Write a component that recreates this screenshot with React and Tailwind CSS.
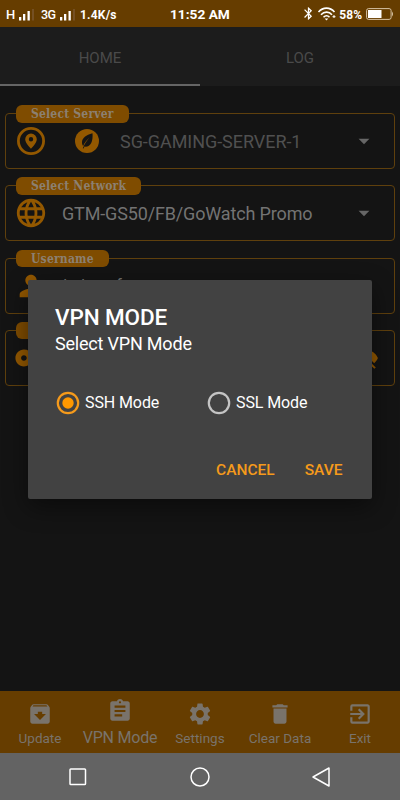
import {
  MdArchive,
  MdArrowDropDown,
  MdAssignment,
  MdBluetooth,
  MdDelete,
  MdExitToApp,
  MdLanguage,
  MdPerson,
  MdSettings,
  MdVisibilityOff,
  MdVpnKey,
} from "react-icons/md";

const navItems = [
  { label: "Update", icon: MdArchive },
  { label: "VPN Mode", icon: MdAssignment, active: true },
  { label: "Settings", icon: MdSettings },
  { label: "Clear Data", icon: MdDelete },
  { label: "Exit", icon: MdExitToApp },
];

function Signal() {
  return (
    <svg viewBox="0 0 17 12" className="h-3 w-[17px] shrink-0">
      <path d="M1 8h2.300v3.500H1zM5 5h2.300v6.500H5zM9.500 2h2.300v9.500H9.500z" fill="#fff" />
      <path d="M14 0h2v11.500h-2z" fill="#755023" />
    </svg>
  );
}

function StatusBar() {
  return (
    <header className="relative flex h-[27px] shrink-0 items-center bg-[#663d00] text-white">
      <div className="flex items-center pt-0.5 pl-1.5">
        <span className="w-[12px] text-[13px] font-medium">H</span>
        <Signal />
        <span className="ml-1.5 w-[18px] pt-px text-[12.5px] font-medium tracking-[-0.5px]">3G</span>
        <Signal />
        <span className="ml-1 text-[12px] font-bold tracking-[0.2px]">1.4K/s</span>
      </div>
      <span className="absolute left-[170px] pt-0.5 text-[13.7px] font-bold">11:52 AM</span>
      <div className="ml-auto flex items-center pr-[6px]">
        <MdBluetooth className="size-[15px]" />
        <svg viewBox="0 0 20 14" className="ml-px h-[14px] w-[20px]" fill="none" stroke="#fff" strokeWidth="1.6">
          <path d="M1.500 5C6-.2 13-.2 17.500 5M4 7.700c3.200-3.500 8-3.500 11 0M6.500 10.200c2-2 4.200-2 6 0" />
          <path d="M9.500 13.500l-1.800-2h3.600z" fill="#fff" stroke="none" />
          <path d="M17 8v3M15.500 9.700h3" strokeWidth="1" />
        </svg>
        <span className="ml-0.5 pt-0.5 text-[12px] font-bold">58%</span>
        <svg viewBox="0 0 28 12" className="ml-1 h-3 w-7">
          <rect x="0.6" y="0.6" width="24.500" height="10.800" rx="2" fill="none" stroke="#d8c4a5" />
          <path d="M2 2h13.500v8H2z" fill="#fff" />
          <path d="M26 3.500q2 2.500 0 5z" fill="#d8c4a5" />
        </svg>
      </div>
    </header>
  );
}

function Tabs() {
  return (
    <div className="grid h-[59px] shrink-0 grid-cols-2 bg-[#1c1c1c] text-[15px] text-[#4a4a4a]">
      <div className="flex items-center justify-center border-b-2 border-[#656565] pt-1.5">HOME</div>
      <div className="flex items-center justify-center pt-1">LOG</div>
    </div>
  );
}

function Field({ label, labelClass, children }) {
  return (
    <div className="relative h-[56px] rounded-[4px] border border-[#5f400d]">
      <span
        className={`absolute -top-[9px] left-[10px] h-[17.5px] rounded-[6px] bg-[#7f4c00] pl-[15px] font-['DejaVu_Serif_Condensed','DejaVu_Serif',serif] text-[12px] leading-[19.5px] font-bold tracking-[0.2px] whitespace-nowrap text-[#8c8071] ${labelClass}`}
      >
        {label}
      </span>
      <div className="flex h-full items-center pr-[17px] pl-[8px]">{children}</div>
    </div>
  );
}

function PinIcon() {
  return (
    <svg viewBox="0 0 30 30" className="size-[30px] shrink-0">
      <circle cx="15" cy="15" r="12.600" fill="none" stroke="#935800" strokeWidth="2.800" />
      <path
        d="M15 7.500a5.800 5.800 0 0 0-5.800 5.800c0 4.200 5.800 9.500 5.800 9.500s5.800-5.300 5.800-9.500A5.800 5.800 0 0 0 15 7.500zm0 8a2.200 2.200 0 1 1 0-4.400 2.200 2.200 0 0 1 0 4.400z"
        fill="#935800"
      />
    </svg>
  );
}

function LeafIcon() {
  return (
    <svg viewBox="0 0 24 24" className="ml-[29px] size-[24px] shrink-0">
      <circle cx="12" cy="12" r="12" fill="#935800" />
      <path
        d="M17.500 4.200C11 6 7.200 9 7 13c-.1 1.800.4 3 1.200 4C9.600 13.500 11.500 11 14.600 8.500 12 11.700 9.700 14.500 7.800 19.300l.8.200.9-1.900c6 .8 8.700-5 8-13.400z"
        fill="#141414"
      />
    </svg>
  );
}

function NavBar() {
  return (
    <nav className="grid h-[62px] shrink-0 grid-cols-5 bg-[#663d00] text-[#79736b]">
      {navItems.map(({ label, icon: Icon, active }) => (
        <div key={label} className={`flex flex-col items-center ${active ? "pt-[7px]" : "pt-[10px]"}`}>
          <Icon className="size-[26px]" />
          <span
            className={`whitespace-nowrap ${active ? "text-[16px] leading-[27px] tracking-[-0.2px]" : "text-[13.5px] leading-[22px]"}`}
          >
            {label}
          </span>
        </div>
      ))}
    </nav>
  );
}

function SystemBar() {
  return (
    <footer className="flex h-[47px] shrink-0 items-center justify-between bg-[#636363] px-[68px]">
      <svg viewBox="0 0 20 20" className="size-5" fill="none" stroke="#fff" strokeWidth="1.5">
        <rect x="2" y="2" width="15.500" height="15.500" rx="0.8" />
      </svg>
      <svg viewBox="0 0 20 20" className="size-5" fill="none" stroke="#fff" strokeWidth="1.5">
        <circle cx="10" cy="10" r="9" />
      </svg>
      <svg viewBox="0 0 20 20" className="size-5" fill="none" stroke="#fff" strokeWidth="1.5" strokeLinejoin="round">
        <path d="M17 1v18L1 10z" />
      </svg>
    </footer>
  );
}

function Radio({ label, checked }) {
  return (
    <label className="flex w-[151px] shrink-0 items-center text-[16px] tracking-[-0.1px] text-white">
      <svg viewBox="0 0 24 24" className="mr-[5px] size-6" fill="none">
        <circle cx="12" cy="12" r="10.200" stroke={checked ? "#f59a1b" : "#c4c4c4"} strokeWidth="2.2" />
        {checked && <circle cx="12" cy="12" r="5.700" fill="#ff9800" />}
      </svg>
      {label}
    </label>
  );
}

function Dialog() {
  return (
    <div className="absolute top-[280px] left-[28px] flex h-[219px] w-[344px] flex-col rounded-[2px] bg-[#424242] px-[27px] pt-[24px] text-white shadow-[0_8px_24px_rgba(0,0,0,0.45)]">
      <h2 className="text-[22.5px] leading-[26px] font-medium tracking-[-0.1px]">VPN MODE</h2>
      <p className="text-[18px] leading-[27px] tracking-[-0.2px]">Select VPN Mode</p>
      <div className="mt-[34px] flex pl-px">
        <Radio label="SSH Mode" checked />
        <Radio label="SSL Mode" />
      </div>
      <div className="mt-[43px] flex justify-end gap-[30px] pr-[2.5px] text-[15.5px] leading-6 font-medium text-[#f59a1b]">
        <button>CANCEL</button>
        <button>SAVE</button>
      </div>
    </div>
  );
}

export default function App() {
  return (
    <div className="relative flex h-[800px] w-[400px] flex-col overflow-hidden bg-[#141414] font-['Roboto',sans-serif]">
      <StatusBar />
      <Tabs />
      <main className="flex flex-1 flex-col gap-[16.3px] pt-[27px] pr-[5px] pl-[5px]">
        <Field label="Select Server" labelClass="w-[113px]">
          <div className="pl-[2px]">
            <PinIcon />
          </div>
          <LeafIcon />
          <span className="ml-[21px] text-[18px] tracking-[-0.05px] text-[#505050]">SG-GAMING-SERVER-1</span>
          <MdArrowDropDown className="ml-auto size-[26px] shrink-0 text-[#666]" />
        </Field>
        <Field label="Select Network" labelClass="w-[125px]">
          <MdLanguage className="size-[34px] shrink-0 text-[#935800]" />
          <span className="ml-[14px] text-[18px] tracking-[-0.15px] whitespace-nowrap text-[#737373]">
            GTM-GS50/FB/GoWatch Promo
          </span>
          <MdArrowDropDown className="ml-auto size-[26px] shrink-0 text-[#666]" />
        </Field>
        <Field label="Username" labelClass="w-[93px]">
          <MdPerson className="size-[34px] shrink-0 text-[#935800]" />
          <span className="ml-[10px] pt-px text-[16px] text-[#737373]">darkgoof</span>
        </Field>
        <Field labelClass="w-[92px]">
          <MdVpnKey className="size-[34px] shrink-0 text-[#935800]" />
          <MdVisibilityOff className="-mr-0.5 ml-auto size-[26px] text-[#935800]" />
        </Field>
      </main>
      <NavBar />
      <SystemBar />
      <Dialog />
    </div>
  );
}
